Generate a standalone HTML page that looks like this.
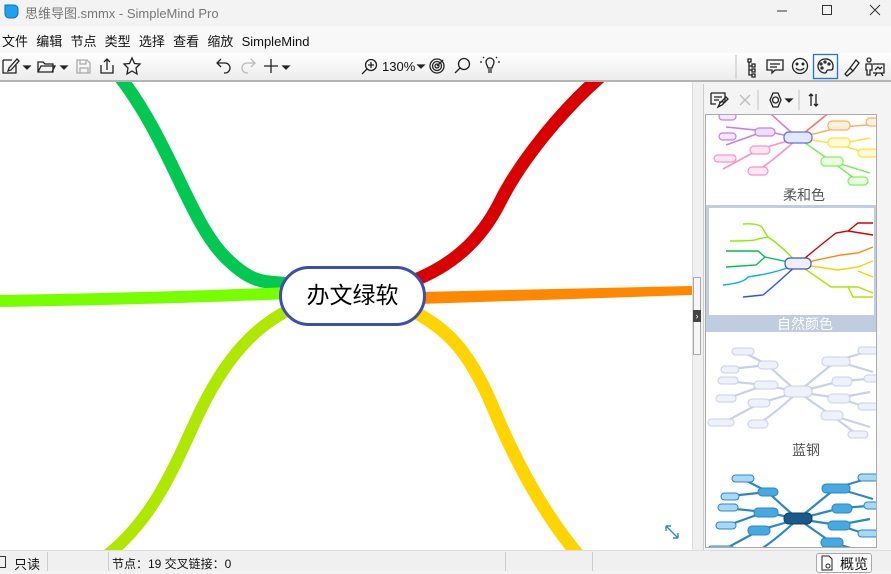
<!DOCTYPE html>
<html><head><meta charset="utf-8"><style>
*{margin:0;padding:0;box-sizing:border-box}
body{width:891px;height:571px;overflow:hidden;background:#f3f3f3;font-family:"Liberation Sans","Noto Sans CJK SC",sans-serif;position:relative;font-size:13px;color:#111}
.abs{position:absolute}
</style></head><body>
<div class="abs" style="left:0;top:0;width:891px;height:26px;background:#f3f3f3"></div>
<svg class="abs" style="left:3px;top:3px" width="16" height="16"><path d="M2 2h9a4 4 0 0 1 4 4v4a5 5 0 0 1-5 5H6a4 4 0 0 1-4-4z" fill="#21a0f0" stroke="#0d6fc0" stroke-width="1"/></svg>
<div class="abs" style="left:25px;top:3px;font-size:13px;color:#777">思维导图.smmx - SimpleMind Pro</div>
<svg class="abs" style="left:770px;top:0" width="121" height="22"><path d="M7 11h10" stroke="#333"/><path d="M52.5 5.5h9v9h-9z" fill="none" stroke="#333"/><path d="M100 5l10 10M110 5l-10 10" stroke="#333"/></svg>
<div class="abs" style="left:0;top:26px;width:891px;height:27px;background:#f8f8f8"></div>
<div class="abs" style="left:2px;top:31px;font-size:13px;word-spacing:0.5px">文件&nbsp; 编辑&nbsp; 节点&nbsp; 类型&nbsp; 选择&nbsp; 查看&nbsp; 缩放&nbsp; SimpleMind</div>
<div class="abs" style="left:0;top:53px;width:891px;height:27px;background:linear-gradient(#fff,#ececec)"></div>
<div class="abs" style="left:0;top:80px;width:891px;height:2px;background:#b4b4b4"></div>
<svg class="abs" style="left:0;top:53px" width="891" height="27" fill="none" stroke="#222" stroke-width="1.3">
<path d="M3 7h9M3 7v13h13v-8M9 15l8-9 2 2-8 9-3 1z"/><path d="M24 13l3 3 3-3z" fill="#222"/>
<path d="M38 9h5l2 2h8v8H38zM38 19l3-6h14l-3 6"/><path d="M61 13l3 3 3-3z" fill="#222"/>
<path d="M77 7h10l3 3v10H77zM80 7v4h6V7M80 20v-5h8v5" stroke="#aaa"/>
<path d="M101 12v8h12v-8M107 17V6M104 9l3-3 3 3"/>
<path d="M132 5l2.5 5.5 5.5.5-4 4 1 6-5-3-5 3 1-6-4-4 5.5-.5z"/>
<path d="M218 10h7a5 5 0 0 1 0 10h-1M221 6l-4 4 4 4"/>
<path d="M254 10h-7a5 5 0 0 0 0 10h1M251 6l4 4-4 4" stroke="#bbb"/>
<path d="M264 13h14M271 6v14"/><path d="M283 13l3 3 3-3z" fill="#222"/>
<circle cx="371" cy="12" r="5.5"/><path d="M367 16l-5 5M368 12h6M371 9v6"/>
<path d="M418 12l3 3 3-3z" fill="#222"/>
<circle cx="437" cy="13" r="7"/><circle cx="437" cy="13" r="4.5"/><circle cx="437" cy="13" r="2"/><path d="M437 13l6-6"/>
<circle cx="464" cy="11" r="5.5"/><path d="M460 15l-5 5"/>
<path d="M486 9a4 4 0 0 1 8 0c0 3-2 4-2 6h-4c0-2-2-3-2-6zM488 17h4M488 19h4M482 9h-2M498 9h2M483 4l1 1M497 4l-1 1"/>
<path d="M736 2v24" stroke="#ccc"/>
<path d="M748 6h3v3h-3zM752 11h3v3h-3zM752 16h3v3h-3zM752 21h3v3h-3zM749 9v13h3M749 13h3M749 17h3"/>
<path d="M767 7h16v10h-8l-3 3v-3h-5zM770 11h10M770 14h7"/>
<circle cx="800" cy="13" r="7.5"/><circle cx="797" cy="11" r=".8" fill="#222"/><circle cx="803" cy="11" r=".8" fill="#222"/><path d="M796 15a5 5 0 0 0 8 0"/>
<rect x="813.5" y="1.5" width="24" height="24" stroke="#1a78d0"/>
<path d="M825 6a7 7 0 1 0 0 14c2 0 1-3 3-3h3c2 0 2-2 2-4a7 7 0 0 0-8-7z"/><circle cx="821" cy="11" r="1"/><circle cx="825" cy="9" r="1"/><circle cx="829" cy="11" r="1"/><circle cx="822" cy="15" r="1"/>
<path d="M845 21l5-6 3 3-6 5zM850 15l6-8 3 3-6 8"/>
<circle cx="869" cy="7" r="2"/><path d="M866 11h6v6h-2v5h-3v-5h-1zM873 11h11v9h-11M877 20l-2 3M881 20l2 3M875 17l3-3 2 2 2-2"/>
</svg>
<div class="abs" style="left:382px;top:59px;font-size:13px">130%</div>
<div class="abs" style="left:0;top:82px;width:692px;height:468px;background:#fff;overflow:hidden">
<svg width="692" height="468" style="position:absolute;left:0;top:0" fill="none" stroke-linecap="butt">
<path d="M120 -5C170 60 190 140 225 175S270 195 300 205" stroke="#00c850" stroke-width="13"/>
<path d="M0 219C120 217 220 214 290 211" stroke="#77ff00" stroke-width="12"/>
<path d="M295 225C250 245 220 285 195 340S150 440 105 475" stroke="#aee800" stroke-width="12"/>
<path d="M600 -5C560 30 520 80 500 120S450 185 410 200" stroke="#d80000" stroke-width="13"/>
<path d="M420 210L692 204L692 213L420 222z" fill="#ff8800" stroke="none"/>
<path d="M415 230C450 250 470 270 495 330S550 440 580 475" stroke="#ffd400" stroke-width="13"/>
<path d="M666 444l12 12M666 444v5M666 444h5M678 456v-5M678 456h-5" stroke="#2a88d8" stroke-width="1.4"/>
</svg>
<div class="abs" style="left:279px;top:184px;width:147px;height:60px;border:3.5px solid #3d4db2;border-radius:30px;background:#fff;text-align:center;line-height:52px;font-size:23px;color:#000">办文绿软</div>
</div>
<div class="abs" style="left:692px;top:82px;width:11px;height:468px;background:#f0f0f0;border-left:1px solid #ddd"></div>
<div class="abs" style="left:693px;top:277px;width:8px;height:78px;border:1px solid #aaa;background:#f6f6f6"></div>
<div class="abs" style="left:693px;top:310px;width:8px;height:12px;background:#444;color:#fff;font-size:9px;line-height:12px;text-align:center">›</div>
<div class="abs" style="left:703px;top:84px;width:188px;height:466px;background:#f4f4f4;border-left:1px solid #ccc"></div>
<svg class="abs" style="left:703px;top:86px" width="188" height="28" fill="none" stroke="#222" stroke-width="1.3">
<path d="M8 7h14v9h-6M8 7v11h5M11 11h8M11 14h5M15 21l2-4 6-6 2 2-6 6z"/>
<path d="M37 9l10 10M47 9l-10 10" stroke="#bbb"/>
<path d="M55 4v20" stroke="#ccc"/>
<path d="M70 7l5 0 3 7-3 7h-5l-3-7z"/><circle cx="72.5" cy="14" r="3"/><path d="M83 13l3 3 3-3z" fill="#222"/>
<path d="M96 4v20" stroke="#ccc"/>
<path d="M108 8v12M106 10l2-2 2 2M113 8v12M111 18l2 2 2-2"/>
</svg>
<div class="abs" style="left:705px;top:114px;width:172px;height:434px;background:#fff;border:1px solid #aaa;overflow:hidden">
<svg width="172" height="434" style="position:absolute;left:0;top:0" fill="none" font-family="Liberation Sans" font-size="4">
<g transform="translate(2,-34)" stroke-width="1.6">
<path d="M90 57Q70 40 60 30M60 30L35 17M60 30L22 34" stroke="#c080ff"/>
<path d="M90 57L57 50M57 50L18 46M57 50L18 64" stroke="#c080ff"/>
<path d="M90 57L52 68M52 68L15 88M90 57Q65 80 50 89" stroke="#ff90c8"/>
<path d="M90 57L128 26M128 26L158 17" stroke="#ff7070"/>
<path d="M90 57L133 46M133 46L160 44" stroke="#ffb060"/>
<path d="M90 57L130 63M130 63L162 57M130 63L158 72" stroke="#ffe040"/>
<path d="M90 57L123 80M123 80L162 92M123 80L150 100" stroke="#80ee60"/>
<g stroke-width="1.2">
<rect x="11" y="32" width="17" height="7" rx="3.5" fill="#f5e8ff" stroke="#c080ff"/>
<rect x="11" y="52" width="17" height="7" rx="3.5" fill="#f5e8ff" stroke="#c080ff"/>
<rect x="47" y="47" width="20" height="8" rx="4" fill="#f0e0ff" stroke="#c080ff"/>
<rect x="42" y="65" width="20" height="8" rx="4" fill="#ffe8f2" stroke="#ff90c8"/>
<rect x="6" y="74" width="22" height="7" rx="3.5" fill="#ffe8f2" stroke="#ff90c8"/>
<rect x="40" y="86" width="20" height="8" rx="4" fill="#ffe8f2" stroke="#ff90c8"/>
<rect x="76" y="51" width="28" height="11" rx="5" fill="#e4e8ff" stroke="#6070d0"/>
<rect x="120" y="40" width="22" height="9" rx="4" fill="#fff0dd" stroke="#ffb060"/>
<rect x="158" y="37" width="18" height="8" rx="4" fill="#fff0dd" stroke="#ffb060"/>
<rect x="120" y="57" width="22" height="9" rx="4" fill="#fffbd8" stroke="#ffe040"/>
<rect x="150" y="68" width="20" height="8" rx="4" fill="#fffbd8" stroke="#ffe040"/>
<rect x="113" y="76" width="22" height="9" rx="4" fill="#eaffe0" stroke="#80ee60"/>
<rect x="140" y="96" width="20" height="8" rx="4" fill="#eaffe0" stroke="#80ee60"/>
</g></g>
<text x="77" y="85" font-size="14" fill="#555" font-family="Noto Sans CJK SC">柔和色</text>
<rect x="1.5" y="91.5" width="168" height="124" fill="#fff" stroke="#c0cce0" stroke-width="3"/>
<rect x="0" y="200" width="172" height="17" fill="#c0cce0"/>
<text x="71" y="214" font-size="14" fill="#fff" font-family="Noto Sans CJK SC">自然颜色</text>
<g transform="translate(2,92)" stroke-width="1.4">
<path d="M90 57Q75 40 60 30L55 22Q53 16 35 17M60 30L50 32Q48 34 22 34" stroke="#88ee00"/>
<path d="M90 57L57 50L50 44L18 44M57 50L48 58L18 60" stroke="#00c050"/>
<path d="M90 57Q70 65 52 68L40 70Q36 76 15 78" stroke="#00b0f0"/>
<path d="M90 57Q65 80 55 88L35 90" stroke="#3050ff"/>
<path d="M90 57Q110 40 128 26L140 24L150 16L165 16M140 24L165 28" stroke="#d80000"/>
<path d="M90 57L133 48L150 46L165 40" stroke="#ff8800"/>
<path d="M90 57L130 63L150 60L165 54M150 64L165 70" stroke="#ffd000"/>
<path d="M90 57L123 80L150 80L165 86M140 80L145 90L165 90" stroke="#aae800"/>
<rect x="77" y="51" width="26" height="11" rx="5" fill="#eef" stroke="#4458b0" stroke-width="1.2"/>
</g>
<g transform="translate(2,220)" stroke="#c8d0ea" stroke-width="2.2">
<path d="M90 57Q70 40 60 30M60 30L35 17M60 30L22 34M90 57L57 50M57 50L18 46M57 50L18 64M90 57L52 68M52 68L15 88M90 57Q65 80 50 89M90 57L128 26M128 26L158 17M128 26L165 37M90 57L133 46M133 46L160 44M90 57L130 63M130 63L162 57M130 63L158 72M90 57L123 80M123 80L162 92M123 80L150 100"/>
<g fill="#eef0fa" stroke-width="1">
<rect x="24" y="13" width="22" height="7" rx="3.5"/><rect x="13" y="31" width="18" height="7" rx="3.5"/><rect x="50" y="26" width="20" height="8" rx="4"/>
<rect x="10" y="42" width="20" height="7" rx="3.5"/><rect x="8" y="60" width="20" height="7" rx="3.5"/><rect x="46" y="46" width="24" height="8" rx="4"/>
<rect x="40" y="64" width="22" height="8" rx="4"/><rect x="0" y="84" width="26" height="7" rx="3.5"/><rect x="40" y="85" width="20" height="8" rx="4"/>
<rect x="76" y="51" width="28" height="11" rx="5"/><rect x="114" y="22" width="28" height="9" rx="4"/><rect x="150" y="12" width="22" height="7" rx="3.5"/>
<rect x="124" y="42" width="20" height="9" rx="4"/><rect x="156" y="40" width="18" height="7" rx="3.5"/><rect x="120" y="59" width="22" height="9" rx="4"/>
<rect x="150" y="68" width="20" height="7" rx="3.5"/><rect x="113" y="76" width="22" height="9" rx="4"/><rect x="140" y="96" width="20" height="7" rx="3.5"/>
</g></g>
<text x="86" y="340" font-size="14" fill="#555" font-family="Noto Sans CJK SC">蓝钢</text>
<g transform="translate(2,347)" stroke="#2888c8" stroke-width="2.2">
<path d="M90 57Q70 40 60 30M60 30L35 17M60 30L22 34M90 57L57 50M57 50L18 46M57 50L18 64M90 57L52 68M52 68L15 88M90 57Q65 80 50 89M90 57L128 26M128 26L158 17M128 26L165 37M90 57L133 46M133 46L160 44M90 57L130 63M130 63L162 57M130 63L158 72M90 57L123 80M123 80L162 92M123 80L150 100"/>
<g fill="#a8d8f4" stroke-width="1">
<rect x="24" y="13" width="22" height="7" rx="3.5"/><rect x="13" y="31" width="18" height="7" rx="3.5"/>
<rect x="10" y="42" width="20" height="7" rx="3.5"/><rect x="8" y="60" width="20" height="7" rx="3.5"/>
<rect x="0" y="84" width="26" height="7" rx="3.5"/><rect x="150" y="12" width="22" height="7" rx="3.5"/>
<rect x="156" y="40" width="18" height="7" rx="3.5"/><rect x="150" y="68" width="20" height="7" rx="3.5"/>
</g>
<g fill="#48a8e0" stroke-width="1">
<rect x="50" y="26" width="20" height="8" rx="4"/><rect x="46" y="46" width="24" height="9" rx="4"/><rect x="40" y="64" width="22" height="9" rx="4"/>
<rect x="114" y="22" width="28" height="9" rx="4"/><rect x="124" y="42" width="20" height="9" rx="4"/><rect x="120" y="59" width="22" height="9" rx="4"/><rect x="113" y="76" width="22" height="9" rx="4"/>
</g>
<rect x="76" y="51" width="28" height="11" rx="5" fill="#1a5a8a" stroke="#0e4068" stroke-width="1"/>
</g>
</svg>
<div class="abs" style="left:171px;top:0;width:1px;height:434px;background:#eee"></div>
<div class="abs" style="left:176px;top:50px;width:3px;height:80px;background:#888"></div>
</div>
<div class="abs" style="left:0;top:550px;width:891px;height:21px;background:#f0f0f0;border-top:1px solid #ddd"></div>
<div class="abs" style="left:-4px;top:556px;width:10px;height:12px;border:1px solid #333"></div>
<div class="abs" style="left:14px;top:554px;font-size:13px">只读</div>
<div class="abs" style="left:47px;top:552px;width:1px;height:19px;background:#ccc"></div>
<div class="abs" style="left:108px;top:552px;width:1px;height:19px;background:#ccc"></div>
<div class="abs" style="left:112px;top:555px;font-size:12px">节点：19 交叉链接：0</div>
<div class="abs" style="left:505px;top:552px;width:1px;height:19px;background:#ccc"></div>
<div class="abs" style="left:592px;top:552px;width:1px;height:19px;background:#ccc"></div>
<div class="abs" style="left:816px;top:553px;width:56px;height:20px;border:1px solid #aaa;border-radius:3px;background:#fafafa"></div>
<svg class="abs" style="left:820px;top:555px" width="14" height="16" fill="none" stroke="#222"><path d="M2 1h7l3 3v11H2z"/><circle cx="8" cy="11" r="2"/></svg>
<div class="abs" style="left:840px;top:554px;font-size:14px">概览</div>
</body></html>
